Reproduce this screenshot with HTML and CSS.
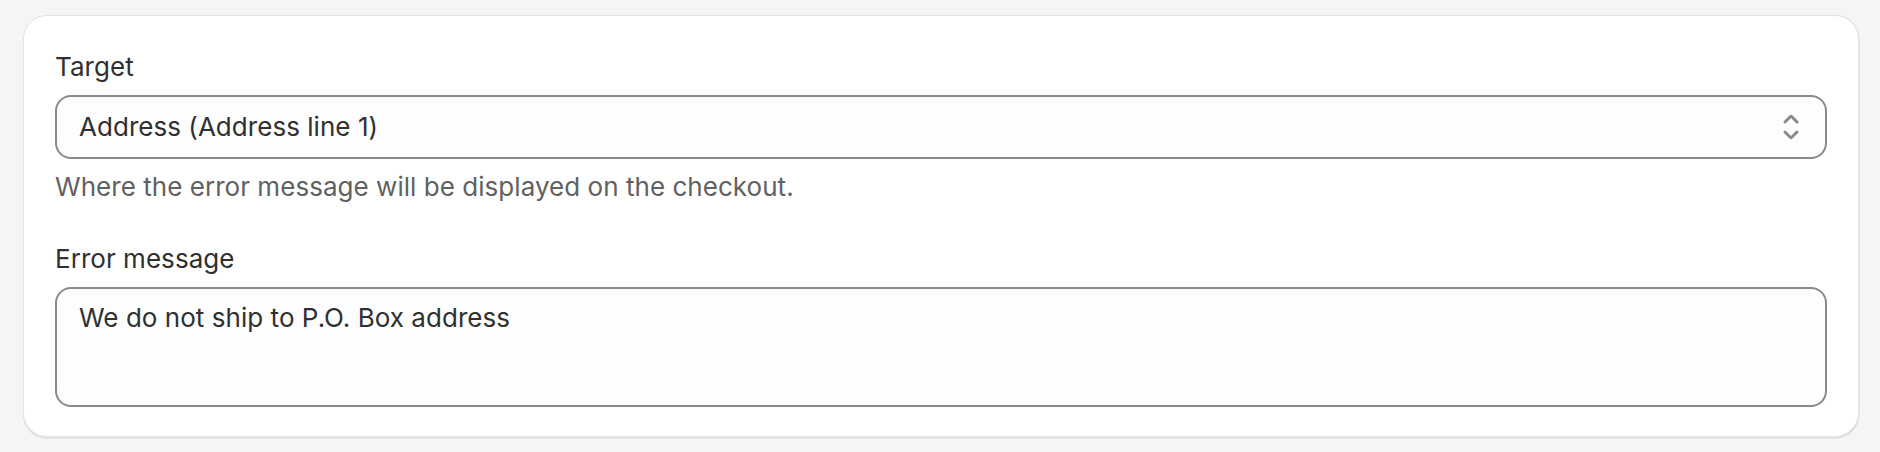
FILE: index.html
```html
<!DOCTYPE html>
<html lang="en">
<head>
<meta charset="utf-8">
<title>Validation</title>
<link rel="stylesheet" href="styles.css">
</head>
<body>
<div class="page">
  <div class="card">
    <div class="field">
      <label class="label">Target</label>
      <div class="select">
        <span class="select-value">Address (Address line 1)</span>
        <svg class="select-icon" viewBox="0 0 20 20" width="40" height="40" aria-hidden="true">
          <path d="M10.884 4.323a1.25 1.25 0 0 0-1.768 0l-2.646 2.647a.75.75 0 0 0 1.06 1.06l2.47-2.470 2.47 2.47a.75.75 0 1 0 1.06-1.06l-2.646-2.647Z"/>
          <path d="m13.53 13.03-2.646 2.647a1.25 1.25 0 0 1-1.768 0l-2.646-2.647a.75.75 0 0 1 1.06-1.06l2.47 2.47 2.47-2.47a.75.75 0 0 1 1.06 1.06Z"/>
        </svg>
      </div>
      <div class="help">Where the error message will be displayed on the checkout.</div>
    </div>
    <div class="field">
      <label class="label">Error message</label>
      <div class="textarea">We do not ship to P.O. Box address</div>
    </div>
  </div>
</div>
</body>
</html>
```

FILE: styles.css
```css
html, body {
  margin: 0;
  padding: 0;
  background: #f5f5f5;
}
body {
  font-family: Inter, "Noto Sans", sans-serif;
  color: #303030;
  font-size: 26px;
  line-height: 40px;
  letter-spacing: 0.04px;
}
.page {
  padding: 15px 21px 14px 23px;
}
.card {
  background: #ffffff;
  border-radius: 24px;
  padding: 31px 31px 29px 31px;
  border: 1px solid #e3e3e3;
  box-shadow: 1px 0 0 0 rgba(0, 0, 0, 0.05), 0 2px 0 0 rgba(26, 26, 26, 0.08);
  display: flex;
  flex-direction: column;
  gap: 32px;
}
.field {
  display: flex;
  flex-direction: column;
}
.label {
  display: block;
  margin-bottom: 8px;
  color: #303030;
}
.select {
  height: 64px;
  box-sizing: border-box;
  border: 2px solid #8a8a8a;
  border-radius: 16px;
  background: #fdfdfd;
  display: flex;
  align-items: center;
  justify-content: space-between;
  padding: 0 14px 0 22px;
}
.select-icon {
  fill: #8a8a8a;
  display: block;
}
.help {
  margin-top: 8px;
  color: #616161;
}
.textarea {
  box-sizing: border-box;
  height: 120px;
  border: 2px solid #8a8a8a;
  border-radius: 16px;
  background: #fdfdfd;
  padding: 9px 22px;
}
```
